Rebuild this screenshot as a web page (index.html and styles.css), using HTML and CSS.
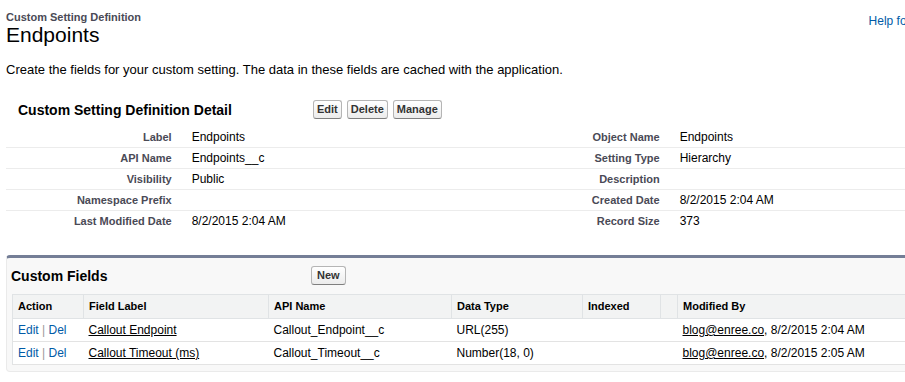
FILE: index.html
```html
<!DOCTYPE html>
<html lang="en">

<head>
    <meta charset="UTF-8">
    <title>Custom Setting Definition: Endpoints</title>
    <link rel="stylesheet" href="styles.css">
</head>

<body>
    <div class="page">
        <div class="page-header">
            <div class="page-titles">
                <h1 class="page-type">Custom Setting Definition</h1>
                <h2 class="page-desc">Endpoints</h2>
            </div>
            <a href="#" class="help-link">Help for this Page</a>
        </div>

        <p class="intro">Create the fields for your custom setting. The data in these fields are cached with the application.</p>

        <!-- Definition detail -->
        <div class="detail-block">
            <div class="block-header detail-header">
                <h3 class="block-title">Custom Setting Definition Detail</h3>
                <div class="block-buttons">
                    <button class="btn">Edit</button>
                    <button class="btn">Delete</button>
                    <button class="btn">Manage</button>
                </div>
            </div>
            <table class="detail-list">
                <colgroup>
                    <col class="label-col">
                    <col class="data-col">
                    <col class="label-col">
                    <col class="data-col">
                </colgroup>
                <tbody>
                    <tr>
                        <td class="label">Label</td>
                        <td class="data">Endpoints</td>
                        <td class="label">Object Name</td>
                        <td class="data">Endpoints</td>
                    </tr>
                    <tr>
                        <td class="label">API Name</td>
                        <td class="data">Endpoints__c</td>
                        <td class="label">Setting Type</td>
                        <td class="data">Hierarchy</td>
                    </tr>
                    <tr>
                        <td class="label">Visibility</td>
                        <td class="data">Public</td>
                        <td class="label">Description</td>
                        <td class="data"></td>
                    </tr>
                    <tr>
                        <td class="label">Namespace Prefix</td>
                        <td class="data"></td>
                        <td class="label">Created Date</td>
                        <td class="data">8/2/2015 2:04 AM</td>
                    </tr>
                    <tr>
                        <td class="label">Last Modified Date</td>
                        <td class="data">8/2/2015 2:04 AM</td>
                        <td class="label">Record Size</td>
                        <td class="data">373</td>
                    </tr>
                </tbody>
            </table>
        </div>

        <!-- Custom fields related list -->
        <div class="related-block">
            <div class="block-header related-header">
                <h3 class="block-title">Custom Fields</h3>
                <div class="block-buttons">
                    <button class="btn">New</button>
                </div>
            </div>
            <table class="field-list">
                <thead>
                    <tr>
                        <th class="col-action">Action</th>
                        <th class="col-label">Field Label</th>
                        <th class="col-api">API Name</th>
                        <th class="col-type">Data Type</th>
                        <th class="col-indexed">Indexed</th>
                        <th class="col-blank"></th>
                        <th class="col-modified">Modified By</th>
                    </tr>
                </thead>
                <tbody>
                    <tr>
                        <td><a href="#" class="action-link">Edit</a> <span class="sep">|</span> <a href="#" class="action-link">Del</a></td>
                        <td><a href="#" class="record-link">Callout Endpoint</a></td>
                        <td>Callout_Endpoint__c</td>
                        <td>URL(255)</td>
                        <td></td>
                        <td></td>
                        <td><a href="#" class="record-link">blog@enree.co</a>, 8/2/2015 2:04 AM</td>
                    </tr>
                    <tr>
                        <td><a href="#" class="action-link">Edit</a> <span class="sep">|</span> <a href="#" class="action-link">Del</a></td>
                        <td><a href="#" class="record-link">Callout Timeout (ms)</a></td>
                        <td>Callout_Timeout__c</td>
                        <td>Number(18, 0)</td>
                        <td></td>
                        <td></td>
                        <td><a href="#" class="record-link">blog@enree.co</a>, 8/2/2015 2:05 AM</td>
                    </tr>
                </tbody>
            </table>
        </div>
    </div>
</body>

</html>
```

FILE: styles.css
```css
html,
body {
    overflow: hidden;
}

body {
    margin: 0;
    font-family: "Liberation Sans", Arial, sans-serif;
    font-size: 12px;
    color: #000;
    background: #fff;
}

.page {
    width: 976px;
    padding: 11px 6px 0;
}

/* Page header */

.page-header {
    display: flex;
    justify-content: space-between;
    align-items: flex-start;
}

.page-type {
    margin: 0;
    font-size: 11px;
    line-height: 13px;
    font-weight: bold;
    color: #4a4a56;
}

.page-desc {
    margin: -1px 0 0;
    font-size: 21px;
    line-height: 24px;
    font-weight: normal;
    color: #000;
}

.help-link {
    margin: 3px 18px 0 0;
    color: #015ba7;
    text-decoration: none;
    line-height: 14px;
}

.intro {
    margin: 15px 0 0;
    font-size: 13px;
    line-height: 16px;
}

/* Blocks */

.block-header {
    display: flex;
    align-items: center;
}

.block-title {
    margin: 0;
    font-size: 14px;
    line-height: 18px;
    font-weight: bold;
    color: #000;
}

.block-buttons {
    display: flex;
    gap: 5px;
}

.btn {
    font-family: "Liberation Sans", Arial, sans-serif;
    font-size: 11px;
    line-height: 13px;
    font-weight: bold;
    color: #333;
    padding: 2px 3px;
    border: 1px solid #b5b5b5;
    border-bottom-color: #7f7f7f;
    border-radius: 3px;
    background: linear-gradient(#ffffff, #ececec);
    cursor: pointer;
}

.detail-block {
    margin-top: 22px;
}

.detail-header {
    padding: 0 0 8px 12px;
}

.detail-header .block-title {
    width: 295px;
}

.detail-list {
    width: 100%;
    border-collapse: collapse;
    table-layout: fixed;
}

.label-col {
    width: 18%;
}

.data-col {
    width: 32%;
}

.detail-list td {
    padding: 3px 0;
    line-height: 14px;
    border-bottom: 1px solid #ececec;
    vertical-align: top;
}

.detail-list tr:last-child td {
    border-bottom: none;
}

.detail-list .label {
    text-align: right;
    padding-right: 10px;
    font-size: 11px;
    font-weight: bold;
    color: #4a4a56;
}

.detail-list .data {
    padding-left: 10px;
}

/* Related list */

.related-block {
    margin-top: 24px;
    background: #f8f8f8;
    border: 1px solid #eaeaea;
    border-top: 3px solid #747e96;
    border-radius: 4px;
    padding: 0 5px 6px;
}

.related-header {
    height: 36px;
    padding-bottom: 1px;
    box-sizing: border-box;
}

.related-header .block-title {
    width: 300px;
    margin-left: -1px;
}

.related-header .btn {
    padding: 2px 5px;
}

.field-list {
    width: 964px;
    border-collapse: collapse;
    table-layout: fixed;
    background: #fff;
    border: 1px solid #e0e3e5;
}

.field-list th {
    background: #f2f3f3;
    text-align: left;
    font-size: 11px;
    font-weight: bold;
    color: #000;
    padding: 5px 2px 5px 5px;
    line-height: 13px;
    border-left: 1px solid #e0e3e5;
    border-bottom: 1px solid #e0e3e5;
}

.field-list td {
    padding: 4px 2px 4px 5px;
    line-height: 14px;
    border-bottom: 1px solid #e3e3e3;
    white-space: nowrap;
}

.col-action {
    width: 63px;
}

.col-label {
    width: 177px;
}

.col-api {
    width: 175px;
}

.col-type {
    width: 123px;
}

.col-indexed {
    width: 70px;
}

.col-blank {
    width: 9px;
}

.action-link {
    color: #015ba7;
    text-decoration: none;
}

.sep {
    color: #999;
}

.record-link {
    color: #000;
    text-decoration: underline;
}
```
